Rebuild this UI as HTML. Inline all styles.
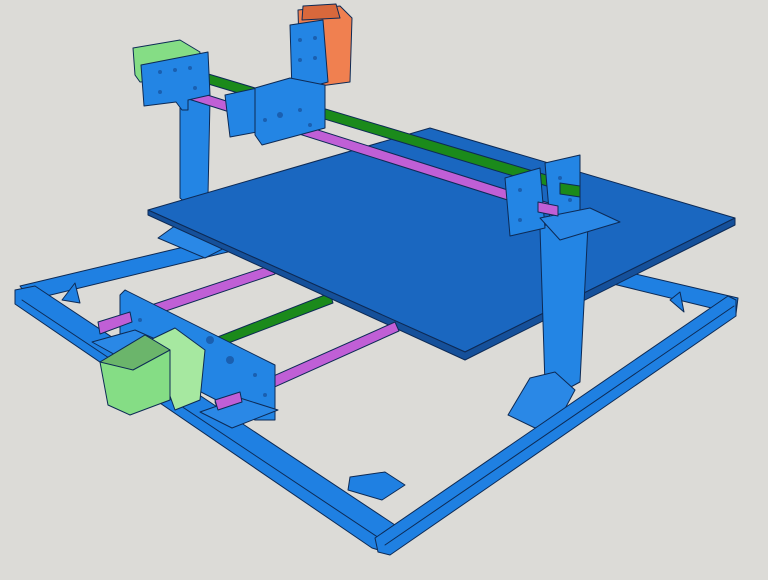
<!DOCTYPE html>
<html><head><meta charset="utf-8"><style>
html,body{margin:0;padding:0;background:#dcdbd7;width:768px;height:580px;overflow:hidden}
svg{display:block}
</style></head><body>
<svg width="768" height="580" viewBox="0 0 768 580" xmlns="http://www.w3.org/2000/svg">
<g stroke="#0d2a55" stroke-width="1" stroke-linejoin="round">
<!-- back rails -->
<polygon points="20,286 230,236 236,250 30,300" fill="#1f80e2"/>
<polygon points="610,268 738,298 736,314 605,282" fill="#1f80e2"/>
<!-- rear left foot -->
<polygon points="158,238 183,220 240,240 205,258" fill="#2a88e6"/>
<!-- back rods under bed -->
<polygon points="100,322 272,265 275,274 104,332" fill="#c05fd6"/>
<polygon points="215,338 330,293 333,303 218,347" fill="#1b8a1b"/>
<!-- left post -->
<polygon points="180,100 205,96 210,100 208,195 186,203 180,198" fill="#2385e4"/>
<!-- bed -->
<polygon points="148,210 430,128 735,218 465,352" fill="#1a67c0"/>
<polygon points="148,210 465,352 735,218 735,225 465,360 148,215" fill="#15509a"/>
<!-- right post -->
<polygon points="540,228 565,215 588,225 580,382 556,395 545,385" fill="#2385e4"/>
<polygon points="508,415 530,378 555,372 575,390 560,418 535,428" fill="#2a88e6"/>
<!-- front rails -->
<polygon points="15,290 35,286 395,525 385,552 372,548 15,304" fill="#1f80e2"/>
<polygon points="22,300 382,540" stroke="#0d2a55" fill="none"/>
<polygon points="375,538 728,296 736,300 736,316 390,555 378,552" fill="#1f80e2"/>
<polygon points="385,545 734,306" stroke="#0d2a55" fill="none"/>
<polygon points="350,477 385,472 405,485 382,500 348,490" fill="#1f80e2"/>
<polygon points="62,300 75,283 80,303" fill="#1f80e2"/>
<polygon points="670,300 680,292 684,312" fill="#1f80e2"/>
<!-- lower front rods -->
<polygon points="215,402 395,322 399,331 219,412" fill="#c05fd6"/>
<!-- lower long plate -->
<polygon points="120,295 125,290 275,365 275,420 255,420 120,350" fill="#2385e4"/>
<polygon points="92,342 135,330 180,350 128,362" fill="#2a88e6"/>
<polygon points="200,412 240,398 278,410 232,428" fill="#2a88e6"/>
<polygon points="98,322 130,312 132,322 100,334" fill="#c05fd6"/>
<polygon points="215,400 240,392 242,402 218,410" fill="#c05fd6"/>
<!-- bottom motor bracket -->
<polygon points="150,340 175,328 205,350 200,400 175,410" fill="#a6e8a0"/>
<polygon points="100,362 145,335 170,350 170,400 130,415 108,405" fill="#85dd85"/>
<polygon points="100,362 145,335 170,350 133,370" fill="#6bb56b"/>
<!-- top rods -->
<polygon points="195,70 580,185 580,196 195,80" fill="#1b8a1b"/>
<polygon points="160,80 555,205 555,215 160,90" fill="#c05fd6"/>
<!-- top-left motor -->
<polygon points="133,48 180,40 200,52 195,80 140,82 135,75" fill="#85dd85"/>
<!-- left top plate T -->
<polygon points="141,65 208,52 210,95 188,100 188,110 182,110 176,102 144,106" fill="#2385e4"/>
<!-- orange motor -->
<polygon points="298,10 340,6 352,18 350,82 320,86 300,78" fill="#f08050"/>
<polygon points="303,6 336,4 340,18 302,20" fill="#d8683c"/>
<polygon points="290,25 323,20 328,82 292,92" fill="#2385e4"/>
<!-- carriage plates -->
<polygon points="225,95 262,87 268,130 230,137" fill="#2385e4"/>
<polygon points="255,88 290,78 325,85 325,128 262,145 255,135" fill="#2385e4"/>
<!-- right plate -->
<polygon points="505,178 540,168 545,228 510,236" fill="#2385e4"/>
<polygon points="545,163 580,155 580,210 550,222" fill="#2385e4"/>
<polygon points="540,218 590,208 620,222 560,240" fill="#2a88e6"/>
<polygon points="538,202 558,206 558,216 538,212" fill="#c05fd6"/>
<polygon points="560,183 580,186 580,197 560,194" fill="#1b8a1b"/>
</g>
<!-- holes -->
<g fill="#1a5fb0">
<circle cx="160" cy="72" r="2"/><circle cx="175" cy="70" r="2"/><circle cx="190" cy="68" r="2"/><circle cx="160" cy="92" r="2"/><circle cx="195" cy="88" r="2"/>
<circle cx="300" cy="40" r="2"/><circle cx="315" cy="38" r="2"/><circle cx="300" cy="60" r="2"/><circle cx="315" cy="58" r="2"/>
<circle cx="265" cy="120" r="2"/><circle cx="280" cy="115" r="3"/><circle cx="300" cy="110" r="2"/><circle cx="310" cy="125" r="2"/>
<circle cx="520" cy="190" r="2"/><circle cx="560" cy="178" r="2"/><circle cx="520" cy="220" r="2"/><circle cx="570" cy="200" r="2"/>
<circle cx="140" cy="320" r="2"/><circle cx="210" cy="340" r="4"/><circle cx="230" cy="360" r="4"/><circle cx="255" cy="375" r="2"/><circle cx="265" cy="395" r="2"/>
</g>
</svg>
</body></html>
